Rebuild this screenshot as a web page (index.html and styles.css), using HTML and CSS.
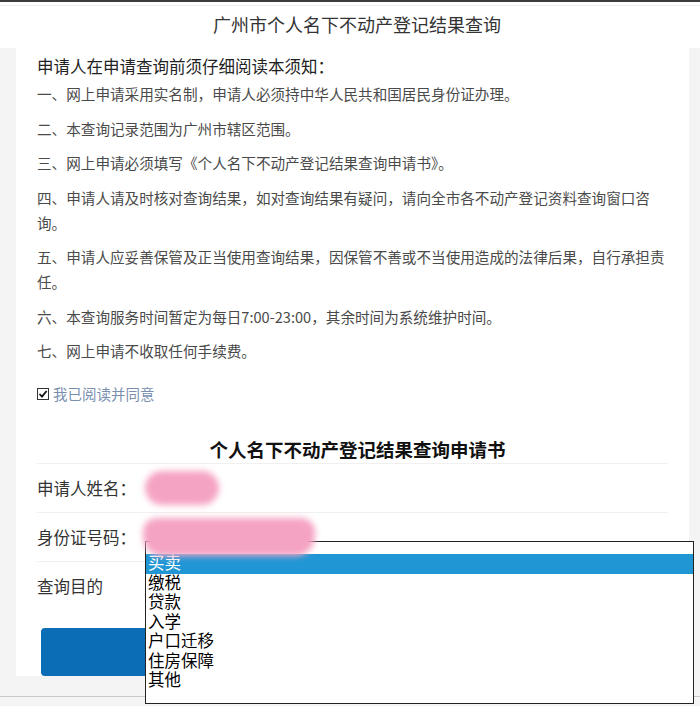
FILE: index.html
```html
<!DOCTYPE html>
<html lang="zh-CN">

<head>
    <meta charset="UTF-8">
    <meta name="viewport" content="width=device-width, initial-scale=1.0">
    <title>广州市个人名下不动产登记结果查询</title>
    <link rel="stylesheet" href="styles.css">
</head>

<body>
    <div class="header">
        <div class="title">广州市个人名下不动产登记结果查询</div>
    </div>
    <div class="main">
        <div class="panel">
            <h3 class="notice-head">申请人在申请查询前须仔细阅读本须知：</h3>
            <p>一、网上申请采用实名制，申请人必须持中华人民共和国居民身份证办理。</p>
            <p>二、本查询记录范围为广州市辖区范围。</p>
            <p>三、网上申请必须填写《个人名下不动产登记结果查询申请书》。</p>
            <p>四、申请人请及时核对查询结果，如对查询结果有疑问，请向全市各不动产登记资料查询窗口咨询。</p>
            <p>五、申请人应妥善保管及正当使用查询结果，因保管不善或不当使用造成的法律后果，自行承担责任。</p>
            <p>六、本查询服务时间暂定为每日7:00-23:00，其余时间为系统维护时间。</p>
            <p>七、网上申请不收取任何手续费。</p>
            <div class="agree">
                <svg class="check" width="12" height="12" viewBox="0 0 12 12">
                    <rect x="0.5" y="0.5" width="11" height="11" fill="#fff" stroke="#333"/>
                    <path d="M2.5 6 L5 8.6 L9.6 3" fill="none" stroke="#111" stroke-width="1.8"/>
                </svg>
                <span>我已阅读并同意</span>
            </div>

            <h2 class="form-head">个人名下不动产登记结果查询申请书</h2>
            <div class="row">
                <span class="label">申请人姓名：</span>
                <span class="smudge small"></span>
            </div>
            <div class="row">
                <span class="label">身份证号码：</span>
                <span class="smudge wide"></span>
            </div>
            <div class="row">
                <span class="label">查询目的</span>
            </div>
            <button class="submit">提交</button>
        </div>
    </div>
    <div class="bottom-bar"></div>

    <ul class="listbox">
        <li class="blank"></li>
        <li class="selected">买卖</li>
        <li>缴税</li>
        <li>贷款</li>
        <li>入学</li>
        <li>户口迁移</li>
        <li>住房保障</li>
        <li>其他</li>
    </ul>
</body>

</html>
```

FILE: styles.css
```css
body {
    margin: 0;
    background: #f4f4f4;
    font-family: "Noto Sans CJK SC", "Noto Sans", sans-serif;
    color: #444;
}

.header {
    background: #fff;
    border-top: 2px solid #3b3b3b;
    padding-top: 3px;
}

.title {
    border-top: 1px solid #ececec;
    height: 36px;
    line-height: 36px;
    padding: 0 0 6px 14px;
    text-align: center;
    font-size: 18px;
    color: #333;
}

.main {
    padding: 0 11px 0 16px;
}

.panel {
    background: #fff;
    padding: 6px 21px 0 21px;
}

.notice-head {
    margin: 0 0 2px 0;
    font-size: 16.5px;
    font-weight: normal;
    line-height: 25px;
    color: #222;
}

p {
    margin: 0 0 9.5px 0;
    width: 632px;
    font-size: 14.6px;
    line-height: 25px;
    color: #4a4a4a;
}

.agree {
    display: flex;
    align-items: center;
    gap: 4px;
    margin-top: 18px;
    height: 25px;
    font-size: 14.5px;
    color: #7a8fb0;
}

.form-head {
    margin: 29.5px 0 0 0;
    padding-left: 10px;
    text-align: center;
    font-size: 18.5px;
    line-height: 27px;
    color: #111;
}

.row {
    display: flex;
    align-items: center;
    height: 48px;
    border-top: 1px solid #f0f0f0;
}

.label {
    width: 108px;
    font-size: 16.5px;
    color: #333;
}

.smudge {
    display: inline-block;
    position: relative;
    z-index: 2;
    background: #f5a3c3;
    border-radius: 18px;
    filter: blur(3px);
}

.smudge.small {
    width: 74px;
    height: 34px;
}

.smudge.wide {
    width: 172px;
    height: 38px;
    margin-left: -2px;
    border-radius: 14px 14px 20px 20px;
}

.submit {
    display: block;
    width: 622px;
    height: 48px;
    margin: 18px 0 0 4px;
    border: none;
    border-radius: 4px;
    background: #0a6db6;
    color: #fff;
    font-size: 18px;
    font-family: inherit;
}

.bottom-bar {
    height: 20px;
    border-bottom: 1px solid #c8c8c8;
    background: #f4f4f4;
}

.listbox {
    position: absolute;
    z-index: 1;
    left: 145px;
    top: 541px;
    width: 547px;
    height: 161px;
    margin: 0;
    padding: 0;
    list-style: none;
    background: #fff;
    border: 1px solid #222;
    font-family: "Liberation Sans", "Noto Sans CJK SC", sans-serif;
    font-size: 16.5px;
    color: #000;
}

.listbox li {
    height: 19.5px;
    line-height: 19.5px;
    padding-left: 2px;
}

.listbox .blank {
    height: 12px;
}

.listbox .selected {
    background: #2196d4;
    color: #fff;
}
```
